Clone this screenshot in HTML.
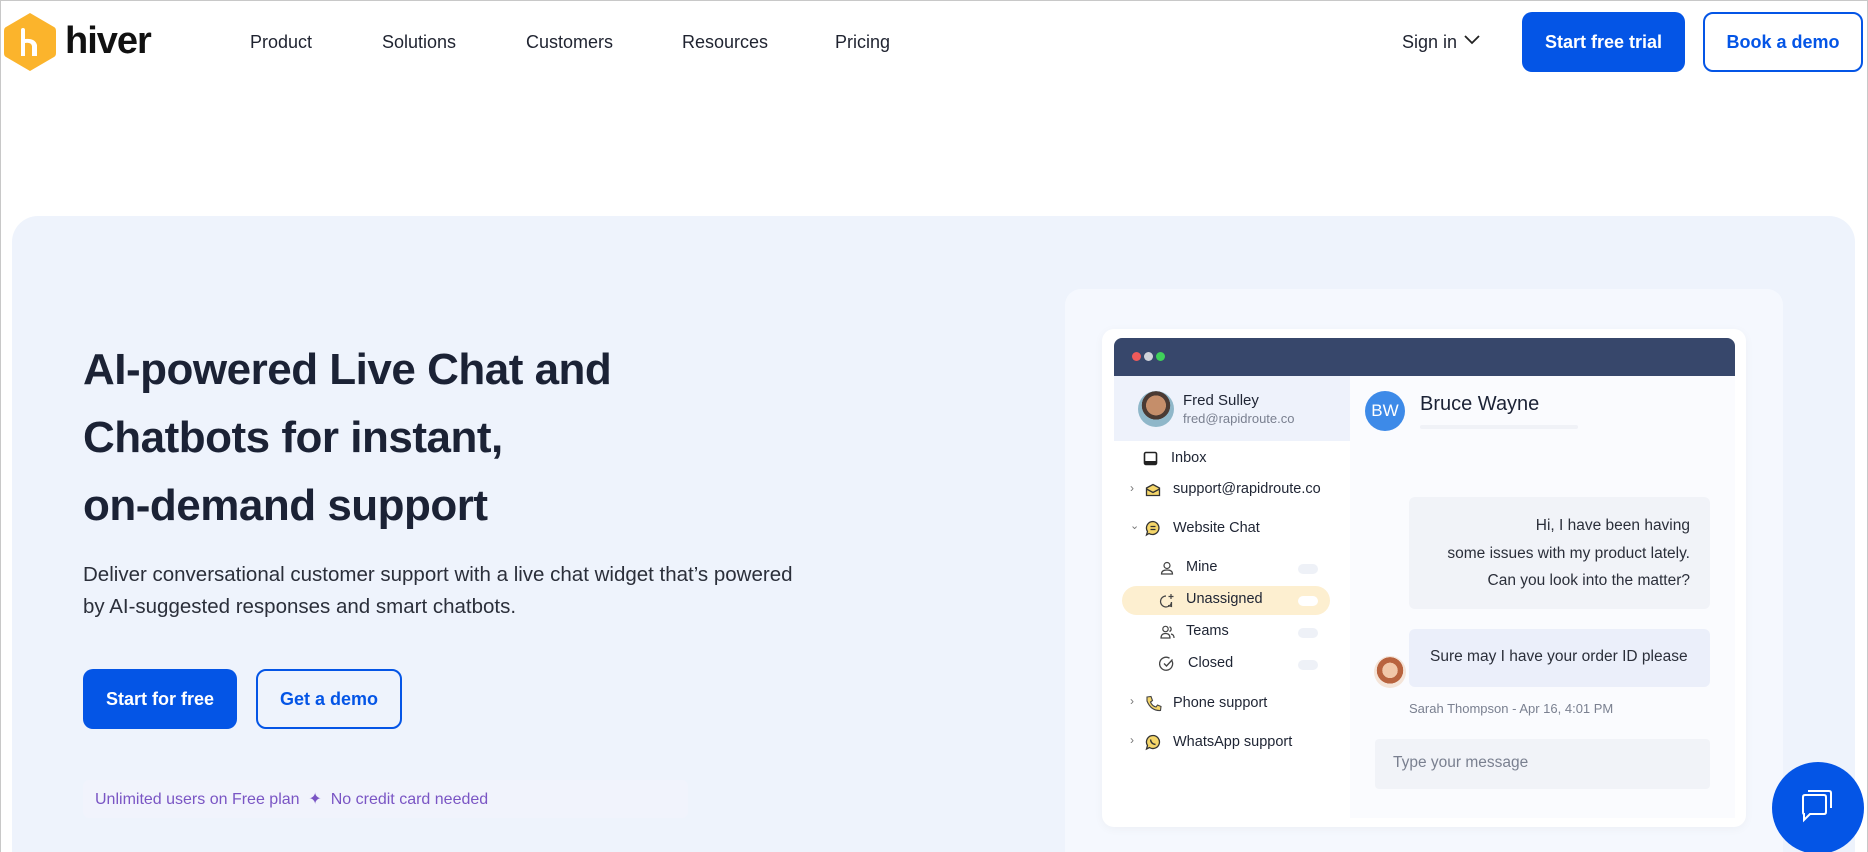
<!DOCTYPE html>
<html style="width:1868px;height:852px;overflow:hidden"><head><meta charset="utf-8">
<style>
*{box-sizing:border-box;margin:0;padding:0}
body{width:1868px;height:852px;overflow:hidden;background:#fff;font-family:"Liberation Sans",sans-serif;position:relative;color:#1b2235}
#wrap{position:absolute;left:0;top:0;width:1868px;height:852px;overflow:hidden}
.a{position:absolute}
.frame{position:absolute;left:0;top:0;width:1868px;height:852px;border:1px solid #c8c8c8;border-bottom:none;pointer-events:none;z-index:20}
.nav{font-size:18px;color:#1f2330;top:32px}
.btn{position:absolute;border-radius:10px;display:flex;align-items:center;justify-content:center;font-weight:bold;font-size:18px}
.side{position:absolute;font-size:14.5px;color:#1e2433;display:flex;align-items:center;white-space:nowrap}
.pill{position:absolute;left:1298px;width:20px;height:10px;border-radius:5px;background:#eef1f7}
</style></head><body><div id="wrap">
<div class="frame"></div>
<!-- logo -->
<svg class="a" style="left:4px;top:12px" width="52" height="60" viewBox="0 0 52 60"><path d="M26 1 L50 15 Q52 16 52 19 L52 41 Q52 44 50 45 L26 59 L2 45 Q0 44 0 41 L0 19 Q0 16 2 15 Z" fill="#fbb42c"/><path d="M17 18 Q17 16 19 16 Q21 16 21 18 L21 27 Q31 26 33 33 L33 44 L28 44 L28 34 Q27 30 21 31 L21 44 L17 44 Z" fill="#fff"/></svg>
<div class="a" style="left:65px;top:20px;font-size:38px;font-weight:bold;color:#111;letter-spacing:-1px">hiver</div>
<div class="a nav" style="left:250px">Product</div>
<div class="a nav" style="left:382px">Solutions</div>
<div class="a nav" style="left:526px">Customers</div>
<div class="a nav" style="left:682px">Resources</div>
<div class="a nav" style="left:835px">Pricing</div>
<div class="a nav" style="left:1402px">Sign in</div>
<svg class="a" style="left:1463px;top:34px" width="18" height="12"><path d="M2 2 L9 9 L16 2" stroke="#222" stroke-width="1.8" fill="none"/></svg>
<div class="btn" style="left:1522px;top:12px;width:163px;height:60px;background:#0455e6;color:#fff">Start free trial</div>
<div class="btn" style="left:1703px;top:12px;width:160px;height:60px;border:2.5px solid #0455e6;color:#0455e6;background:#fff">Book a demo</div>
<!-- hero -->
<div class="a" style="left:12px;top:216px;width:1843px;height:660px;background:#eef3fc;border-radius:26px"></div>
<div class="a" style="left:83px;top:336px;font-size:44px;font-weight:bold;line-height:68px;color:#1b2235;letter-spacing:-0.5px">AI-powered Live Chat and<br>Chatbots for instant,<br>on-demand support</div>
<div class="a" style="left:83px;top:559px;font-size:20.5px;line-height:32px;color:#2b2f3a">Deliver conversational customer support with a live chat widget that’s powered<br>by AI-suggested responses and smart chatbots.</div>
<div class="btn" style="left:83px;top:669px;width:154px;height:60px;background:#0455e6;color:#fff">Start for free</div>
<div class="btn" style="left:256px;top:669px;width:146px;height:60px;border:2.5px solid #0455e6;color:#0455e6">Get a demo</div>
<div class="a" style="left:83px;top:780px;width:605px;height:38px;background:#f1f3fc;border-radius:6px"></div>
<div class="a" style="left:95px;top:789px;font-size:16px;color:#7a55c4">Unlimited users on Free plan &nbsp;✦&nbsp; No credit card needed</div>
<!-- right panel -->
<div class="a" style="left:1065px;top:289px;width:718px;height:600px;background:#f5f8fe;border-radius:16px"></div>
<div class="a" style="left:1102px;top:329px;width:644px;height:498px;background:#fff;border-radius:12px;box-shadow:0 2px 10px rgba(0,0,0,.04)"></div>
<div class="a" style="left:1114px;top:338px;width:621px;height:38px;background:#37476b;border-radius:8px 8px 0 0"></div>
<div class="a" style="left:1132px;top:352px;width:9px;height:9px;border-radius:50%;background:#ef5a5a"></div>
<div class="a" style="left:1144px;top:352px;width:9px;height:9px;border-radius:50%;background:#cfd3da"></div>
<div class="a" style="left:1156px;top:352px;width:9px;height:9px;border-radius:50%;background:#3fd25a"></div>
<div class="a" style="left:1114px;top:376px;width:621px;height:442px;background:#fafbfe"></div>
<div class="a" style="left:1114px;top:376px;width:236px;height:442px;background:#fff"></div>
<div class="a" style="left:1114px;top:376px;width:236px;height:65px;background:#eef2fb"></div>
<div class="a" style="left:1138px;top:391px;width:36px;height:36px;border-radius:50%;background:radial-gradient(circle at 50% 40%,#c58e6a 0 35%,#4a3a33 36% 50%,#8fb7c9 51%)"></div>
<div class="a" style="left:1183px;top:392px;font-size:15px;color:#1e2433">Fred Sulley</div>
<div class="a" style="left:1183px;top:411px;font-size:13px;color:#7a8090">fred@rapidroute.co</div>
<!-- sidebar items -->
<svg class="a" style="left:1143px;top:451px" width="15" height="15"><rect x="1.5" y="1.5" width="12" height="12" rx="1.5" fill="none" stroke="#222" stroke-width="1.6"/><rect x="1.5" y="10" width="12" height="3.5" fill="#222"/></svg>
<div class="side" style="left:1171px;top:450px">Inbox</div>
<div class="side" style="left:1130px;top:481px;color:#777;font-size:12px">›</div>
<svg class="a" style="left:1145px;top:483px" width="16" height="14"><path d="M1.5 5 L8 1.5 L14.5 5 L14.5 12.5 L1.5 12.5Z" fill="#f5d66a" stroke="#333" stroke-width="1.3"/><path d="M1.5 6 L8 9.5 L14.5 6" fill="none" stroke="#333" stroke-width="1.3"/></svg>
<div class="side" style="left:1173px;top:481px">support@rapidroute.co</div>
<div class="side" style="left:1130px;top:519px;color:#777;font-size:11px">⌄</div>
<svg class="a" style="left:1145px;top:520px" width="16" height="17"><path d="M8 1.5 A6.5 6.5 0 1 1 4 13.5 L1.5 15 L2.5 11.5 A6.5 6.5 0 0 1 8 1.5Z" fill="#f5d66a" stroke="#333" stroke-width="1.3"/><path d="M5.5 6.5 H10.5 M5.5 9.5 H10.5" stroke="#333" stroke-width="1.2"/></svg>
<div class="side" style="left:1173px;top:520px">Website Chat</div>
<div class="a" style="left:1122px;top:586px;width:208px;height:29px;border-radius:15px;background:#fdefd0"></div>
<svg class="a" style="left:1160px;top:561px" width="14" height="14"><circle cx="7" cy="4.5" r="3" fill="none" stroke="#444" stroke-width="1.2"/><path d="M1.5 13 Q1.5 9 7 9 Q12.5 9 12.5 13 Z" fill="none" stroke="#444" stroke-width="1.2"/></svg>
<div class="side" style="left:1186px;top:559px">Mine</div>
<div class="pill" style="top:564px"></div>
<svg class="a" style="left:1159px;top:593px" width="16" height="16"><path d="M7 3 A5.5 5.5 0 1 0 12.5 9 L12.5 13.5 L9 12.5" fill="none" stroke="#444" stroke-width="1.2"/><path d="M12 1 V6 M9.5 3.5 H14.5" stroke="#444" stroke-width="1.2"/></svg>
<div class="side" style="left:1186px;top:591px">Unassigned</div>
<div class="pill" style="top:596px;background:#fff"></div>
<svg class="a" style="left:1160px;top:625px" width="15" height="14"><circle cx="5.5" cy="4" r="2.7" fill="none" stroke="#444" stroke-width="1.2"/><path d="M1 13 Q1 8.5 5.5 8.5 Q10 8.5 10 13 Z" fill="none" stroke="#444" stroke-width="1.2"/><path d="M9.5 1.8 A2.5 2.5 0 0 1 9.5 6.5 M11 9 Q14 9.5 14 13" fill="none" stroke="#444" stroke-width="1.2"/></svg>
<div class="side" style="left:1186px;top:623px">Teams</div>
<div class="pill" style="top:628px"></div>
<svg class="a" style="left:1159px;top:656px" width="16" height="16"><path d="M13 5 A6.5 6.5 0 1 1 10.5 2.2" fill="none" stroke="#444" stroke-width="1.3"/><path d="M5 7.5 L7.5 10 L13.5 3.5" fill="none" stroke="#444" stroke-width="1.3"/></svg>
<div class="side" style="left:1188px;top:655px">Closed</div>
<div class="pill" style="top:660px"></div>
<div class="side" style="left:1130px;top:694px;color:#777;font-size:12px">›</div>
<svg class="a" style="left:1145px;top:695px" width="17" height="17"><path d="M2 2 L6 1.5 L7.5 5.5 L5.5 7 Q7 11 11 12 L12.5 10 L16 11.5 L15.5 15.5 Q6 16 2 6 Z" fill="#f5d66a" stroke="#444" stroke-width="1.1"/></svg>
<div class="side" style="left:1173px;top:695px">Phone support</div>
<div class="side" style="left:1130px;top:733px;color:#777;font-size:12px">›</div>
<svg class="a" style="left:1145px;top:734px" width="16" height="17"><path d="M8 1.5 A6.5 6.5 0 1 1 4.5 13.5 L1.5 15 L2.5 11.5 A6.5 6.5 0 0 1 8 1.5Z" fill="#f5d66a" stroke="#333" stroke-width="1.3"/><path d="M5.5 5.5 Q6 10 10.5 10.5" fill="none" stroke="#333" stroke-width="1.4"/></svg>
<div class="side" style="left:1173px;top:734px">WhatsApp support</div>
<!-- chat -->
<div class="a" style="left:1365px;top:391px;width:40px;height:40px;border-radius:50%;background:#3d8ae8;color:#fff;font-size:17px;display:flex;align-items:center;justify-content:center">BW</div>
<div class="a" style="left:1420px;top:393px;font-size:20px;color:#1b2235">Bruce Wayne</div>
<div class="a" style="left:1420px;top:425px;width:158px;height:4px;border-radius:2px;background:#f0f2f7"></div>
<div class="a" style="left:1409px;top:497px;width:301px;height:112px;background:#f1f3f8;border-radius:6px"></div>
<div class="a" style="left:1409px;top:512px;width:281px;text-align:right;font-size:15.5px;line-height:27.5px;color:#2b2f3a;white-space:nowrap">Hi, I have been having<br>some issues with my product lately.<br>Can you look into the matter?</div>
<div class="a" style="left:1409px;top:629px;width:301px;height:58px;background:#ebeffa;border-radius:6px"></div>
<div class="a" style="left:1430px;top:648px;font-size:15.5px;color:#2b2f3a;white-space:nowrap">Sure may I have your order ID please</div>
<div class="a" style="left:1374px;top:656px;width:32px;height:32px;border-radius:50%;background:radial-gradient(circle at 50% 45%,#f1c7a8 0 32%,#b8633e 33% 55%,#f4e4d8 56%)"></div>
<div class="a" style="left:1409px;top:701px;font-size:13px;color:#7a8090">Sarah Thompson - Apr 16, 4:01 PM</div>
<div class="a" style="left:1375px;top:739px;width:335px;height:50px;background:#f1f3f8;border-radius:4px"></div>
<div class="a" style="left:1393px;top:754px;font-size:15.5px;color:#7a8090">Type your message</div>
<!-- fab -->
<div class="a" style="left:1772px;top:762px;width:92px;height:92px;border-radius:50%;background:#0455e6"></div>
<svg class="a" style="left:1796px;top:784px" width="44" height="44" viewBox="0 0 44 44"><path d="M7 13 Q7 11 9 11 L28 11 Q30 11 30 13 L30 28 Q30 30 28 30 L14 30 L8 36 L8 30 Q7 30 7 28 Z" fill="none" stroke="#fff" stroke-width="2"/><path d="M12 7 L33 7 Q35 7 35 9 L35 24" fill="none" stroke="#fff" stroke-width="2"/></svg>
</div></body></html>
